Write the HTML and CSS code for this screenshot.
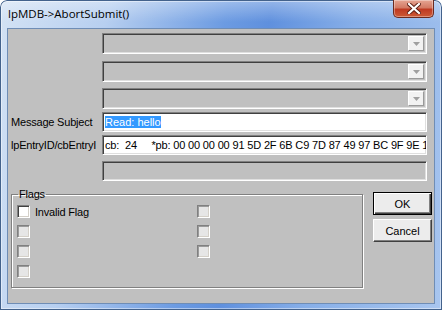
FILE: index.html
```html
<!DOCTYPE html>
<html>
<head>
<meta charset="utf-8">
<link rel="stylesheet" href="styles.css">
</head>
<body>
<div class="window">
  <div class="titlebar">
    <span class="title">lpMDB-&gt;AbortSubmit()</span>
    <div class="close">
      <svg width="14" height="11" viewBox="0 0 14 11">
        <path d="M2 1 L12 10 M12 1 L2 10" stroke="#5a1d12" stroke-width="4" stroke-linecap="square"/>
        <path d="M2 1 L12 10 M12 1 L2 10" stroke="#ffffff" stroke-width="2.2" stroke-linecap="square"/>
      </svg>
    </div>
  </div>
  <div class="client">
    <div class="row row-combo">
      <span class="label"></span>
      <div class="field combo disabled"><div class="drop"><svg width="7" height="4" viewBox="0 0 7 4"><path d="M0 0 H7 L3.5 4 Z" fill="#a0a0a0"/></svg></div></div>
    </div>
    <div class="row row-combo gap-l">
      <span class="label"></span>
      <div class="field combo disabled"><div class="drop"><svg width="7" height="4" viewBox="0 0 7 4"><path d="M0 0 H7 L3.5 4 Z" fill="#a0a0a0"/></svg></div></div>
    </div>
    <div class="row row-combo gap-m">
      <span class="label"></span>
      <div class="field combo disabled"><div class="drop"><svg width="7" height="4" viewBox="0 0 7 4"><path d="M0 0 H7 L3.5 4 Z" fill="#a0a0a0"/></svg></div></div>
    </div>
    <div class="row gap-s">
      <span class="label">Message Subject</span>
      <div class="field edit"><span class="sel">Read: hello</span></div>
    </div>
    <div class="row gap-s">
      <span class="label">lpEntryID/cbEntryI</span>
      <div class="field edit"><span class="hex">cb:  24     *pb: 00 00 00 00 91 5D 2F 6B C9 7D 87 49 97 BC 9F 9E 1F 00 00</span></div>
    </div>
    <div class="row gap-m">
      <span class="label"></span>
      <div class="field edit disabled"></div>
    </div>
    <div class="bottom">
      <fieldset class="group">
        <legend>Flags</legend>
        <div class="checks">
          <div class="check"><span class="cb"></span><span>Invalid Flag</span></div>
          <div class="check"><span class="cb disabled"></span></div>
          <div class="check"><span class="cb disabled"></span></div>
          <div class="check"><span class="cb disabled"></span></div>
          <div class="check"><span class="cb disabled"></span></div>
          <div class="check"><span class="cb disabled"></span></div>
          <div class="check"><span class="cb disabled"></span></div>
        </div>
      </fieldset>
      <div class="buttons">
        <button class="btn default">OK</button>
        <button class="btn">Cancel</button>
      </div>
    </div>
  </div>
</div>
</body>
</html>
```

FILE: styles.css
```css
* { box-sizing: border-box; }
html, body { margin: 0; padding: 0; }
body {
  width: 442px;
  height: 310px;
  overflow: hidden;
  background: #ffffff;
  font-family: "Liberation Sans", Arial, sans-serif;
  font-size: 11px;
  color: #000;
}
.window {
  width: 442px;
  height: 310px;
  display: flex;
  flex-direction: column;
  border-radius: 7px 7px 0 0;
  background:
    linear-gradient(180deg, rgba(255,255,255,0.35) 0px, rgba(255,255,255,0) 22px),
    linear-gradient(100deg, #d3e2f4 0%, #b7cff0 22%, #6c9be2 46%, #5f90de 55%, #86aee8 72%, #a9c6ef 100%);
  box-shadow: inset 0 0 0 1px #43628c, inset 0 0 0 2px rgba(255,255,255,0.45);
}
.titlebar {
  height: 29px;
  display: flex;
  justify-content: space-between;
  align-items: flex-start;
  padding: 0 8px 0 8px;
}
.title {
  font-family: "Open Sans", "Noto Sans", sans-serif;
  font-size: 11.5px;
  line-height: 16px;
  margin-top: 6px;
  color: #000;
}
.close {
  width: 41px;
  height: 18px;
  border: 1px solid #6b2a1f;
  border-top: none;
  border-radius: 0 0 5px 5px;
  background: linear-gradient(180deg, #e6a593 0%, #d37a64 45%, #bf3a22 55%, #cc5a36 100%);
  box-shadow: inset 0 0 0 1px rgba(255,255,255,0.35);
  display: flex;
  align-items: center;
  justify-content: center;
}
.client {
  margin: 0 8px;
  height: 274px;
  background: #c0c0c0;
  box-shadow: 0 0 0 1px #6f8db5;
  display: flex;
  flex-direction: column;
  padding: 4px 0 0 3px;
}
.row {
  display: flex;
  align-items: stretch;
  height: 20px;
}
.row-combo { height: 21px; }
.gap-s { margin-top: 3px; }
.gap-m { margin-top: 6px; }
.gap-l { margin-top: 7px; }
.label {
  width: 91px;
  white-space: nowrap;
  overflow: hidden;
  line-height: 20px;
  letter-spacing: -0.2px;
}
.field {
  width: 325px;
  border: 1px solid;
  border-color: #808080 #ffffff #ffffff #808080;
  box-shadow: inset 1px 1px 0 #404040, inset -1px -1px 0 #dfdfdf;
  background: #ffffff;
  overflow: hidden;
  white-space: pre;
}
.field.disabled { background: #c0c0c0; }
.combo {
  display: flex;
  justify-content: flex-end;
  align-items: center;
  padding: 2px 2px 2px 2px;
}
.drop {
  width: 16px;
  height: 15px;
  background: #f2f2f2;
  border: 1px solid;
  border-color: #ffffff #9a9a9a #9a9a9a #ffffff;
  display: flex;
  align-items: center;
  justify-content: center;
}
.edit {
  padding: 1px 2px 0 2px;
  line-height: 16px;
}
.sel {
  background: #3399ff;
  color: #ffffff;
}
.hex {
  letter-spacing: -0.16px;
}
.bottom {
  display: flex;
  align-items: flex-start;
  gap: 10px;
  margin-top: 7px;
}
.group {
  width: 352px;
  height: 100px;
  margin: 0;
  padding: 0;
  min-width: 0;
  border: 1px solid #808080;
  box-shadow: inset 1px 1px 0 #ffffff, 1px 1px 0 #ffffff;
}
.group legend {
  margin-left: 6px;
  padding: 0 1px;
  line-height: 13px;
  letter-spacing: -0.2px;
}
.checks {
  display: grid;
  grid-template-columns: 180px auto;
  row-gap: 7px;
  padding: 4px 0 0 5px;
}
.check {
  display: flex;
  align-items: center;
  gap: 5px;
  height: 13px;
  letter-spacing: -0.2px;
}
.cb {
  width: 13px;
  height: 13px;
  border: 1px solid;
  border-color: #808080 #ffffff #ffffff #808080;
  box-shadow: inset 1px 1px 0 #404040, inset -1px -1px 0 #d4d0c8;
  background: #ffffff;
}
.cb.disabled {
  background: #e6e6e6;
  box-shadow: inset 1px 1px 0 #9a9a9a, inset -1px -1px 0 #d4d0c8;
}
.buttons {
  display: flex;
  flex-direction: column;
  gap: 4px;
  padding-top: 4px;
}
.btn {
  width: 59px;
  height: 23px;
  padding: 0;
  font-family: "Liberation Sans", Arial, sans-serif;
  font-size: 11px;
  color: #000;
  background: #ececec;
  border: 1px solid;
  border-color: #ffffff #404040 #404040 #ffffff;
  box-shadow: inset -1px -1px 0 #808080;
}
.btn.default {
  border: 1px solid #000;
  box-shadow: inset 1px 1px 0 #ffffff, inset -1px -1px 0 #404040, inset -2px -2px 0 #808080;
}
```
